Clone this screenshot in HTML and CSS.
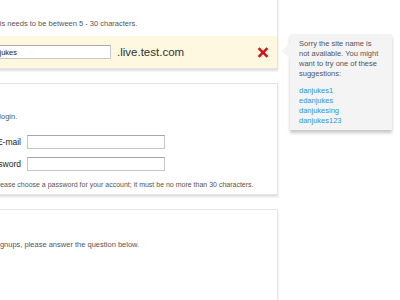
FILE: index.html
```html
<!DOCTYPE html>
<html lang="en">
<head>
    <meta charset="UTF-8">
    <meta name="viewport" content="width=device-width, initial-scale=1.0">
    <title>Create your site</title>
    <link rel="stylesheet" href="styles.css">
</head>
<body>
    <div class="page">
        <main class="forms">
            <section class="card">
                <div class="card-body first">
                    <p class="hint">This needs to be between 5 - 30 characters.</p>
                </div>
                <div class="site-row">
                    <input class="site-input" type="text" value="danjukes">
                    <span class="domain">.live.test.com</span>
                    <svg class="error-x" width="12" height="11" viewBox="0 0 12 11">
                        <path d="M1.6 1.2l8.8 8.6M10.4 1.2l-8.8 8.6" stroke="#d2141a" stroke-width="2.5" fill="none"/>
                    </svg>
                    <div class="tooltip">
                        <p>Sorry the site name is not available. You might want to try one of these suggestions:</p>
                        <ul class="suggestions">
                            <li><a href="#">danjukes1</a></li>
                            <li><a href="#">edanjukes</a></li>
                            <li><a href="#">danjukesing</a></li>
                            <li><a href="#">danjukes123</a></li>
                        </ul>
                    </div>
                </div>
            </section>

            <section class="card">
                <div class="card-body second">
                    <p class="hint">to login.</p>
                    <div class="field">
                        <label>E-mail</label>
                        <input type="email">
                    </div>
                    <div class="field">
                        <label>Password</label>
                        <input type="password">
                    </div>
                    <p class="help">Please choose a password for your account; it must be no more than 30 characters.</p>
                </div>
            </section>

            <section class="card">
                <div class="card-body third">
                    <p class="hint">signups, please answer the question below.</p>
                </div>
            </section>
        </main>
    </div>
</body>
</html>
```

FILE: styles.css
```css
*{
    margin: 0;
    padding: 0;
    box-sizing: border-box;
    font-family: "Liberation Sans", Arial, Helvetica, sans-serif;
}

body{
    background-color: #fff;
    overflow: hidden;
}

/* the page is wider than the window, we only see its middle part */
.page{
    margin: -20px 0 0 -60px;
    width: 338px;
}

.card{
    background-color: #fff;
    border: 1px solid #e4e4e4;
    box-shadow: 0 2px 2px rgba(0, 0, 0, .13);
    margin-bottom: 14px;
}

.card-body{
    padding-left: 29px;
}
.card-body.first{
    padding: 38px 0 7px 29px;
}
.card-body.second{
    padding: 28px 0 4px 29px;
}
.card-body.third{
    padding: 30px 0 50px 29px;
}

.hint{
    font-size: 7.5px;
    line-height: 10px;
    color: #555;
    padding-left: 21px;
}
.third .hint{
    padding-left: 24.5px;
}

.site-row{
    position: relative;
    display: flex;
    align-items: center;
    background-color: #fdf8df;
    padding: 9px 8px 9px 43px;
}
.site-input{
    width: 127px;
    height: 14px;
    border: 1px solid #c9c9c9;
    border-top-color: #a9a9a9;
    padding: 0 2px;
    font-size: 7.5px;
    color: #222;
    outline: 0;
}
.domain{
    font-size: 11.5px;
    color: #333;
    margin-left: 6px;
}
.error-x{
    margin-left: auto;
    display: block;
}

.tooltip{
    position: absolute;
    left: calc(100% + 13px);
    top: -2px;
    width: 102px;
    background-color: #f4f4f4;
    padding: 5px 9px 4px 9px;
    box-shadow: 0 3px 3px rgba(0, 0, 0, .22);
    font-size: 7.5px;
    line-height: 10px;
    color: #555;
}
.tooltip::before{
    content: "";
    position: absolute;
    left: -8px;
    top: 9px;
    border-style: solid;
    border-width: 8px 8px 8px 0;
    border-color: transparent #f4f4f4 transparent transparent;
}
.suggestions{
    list-style: none;
    margin-top: 7px;
}
.suggestions a{
    color: #2b96dc;
    text-decoration: none;
}

.field{
    display: flex;
    align-items: center;
    gap: 6px;
    margin-top: 13px;
}
.field + .field{
    margin-top: 8px;
}
.field label{
    width: 51px;
    text-align: right;
    font-size: 8.5px;
    color: #222;
}
.field input{
    width: 138px;
    height: 14px;
    border: 1px solid #c4c4c4;
    border-top-color: #a6a6a6;
    outline: 0;
}

.help{
    font-size: 7px;
    line-height: 10px;
    color: #555;
    padding-left: 24px;
    margin-top: 9px;
}
```
